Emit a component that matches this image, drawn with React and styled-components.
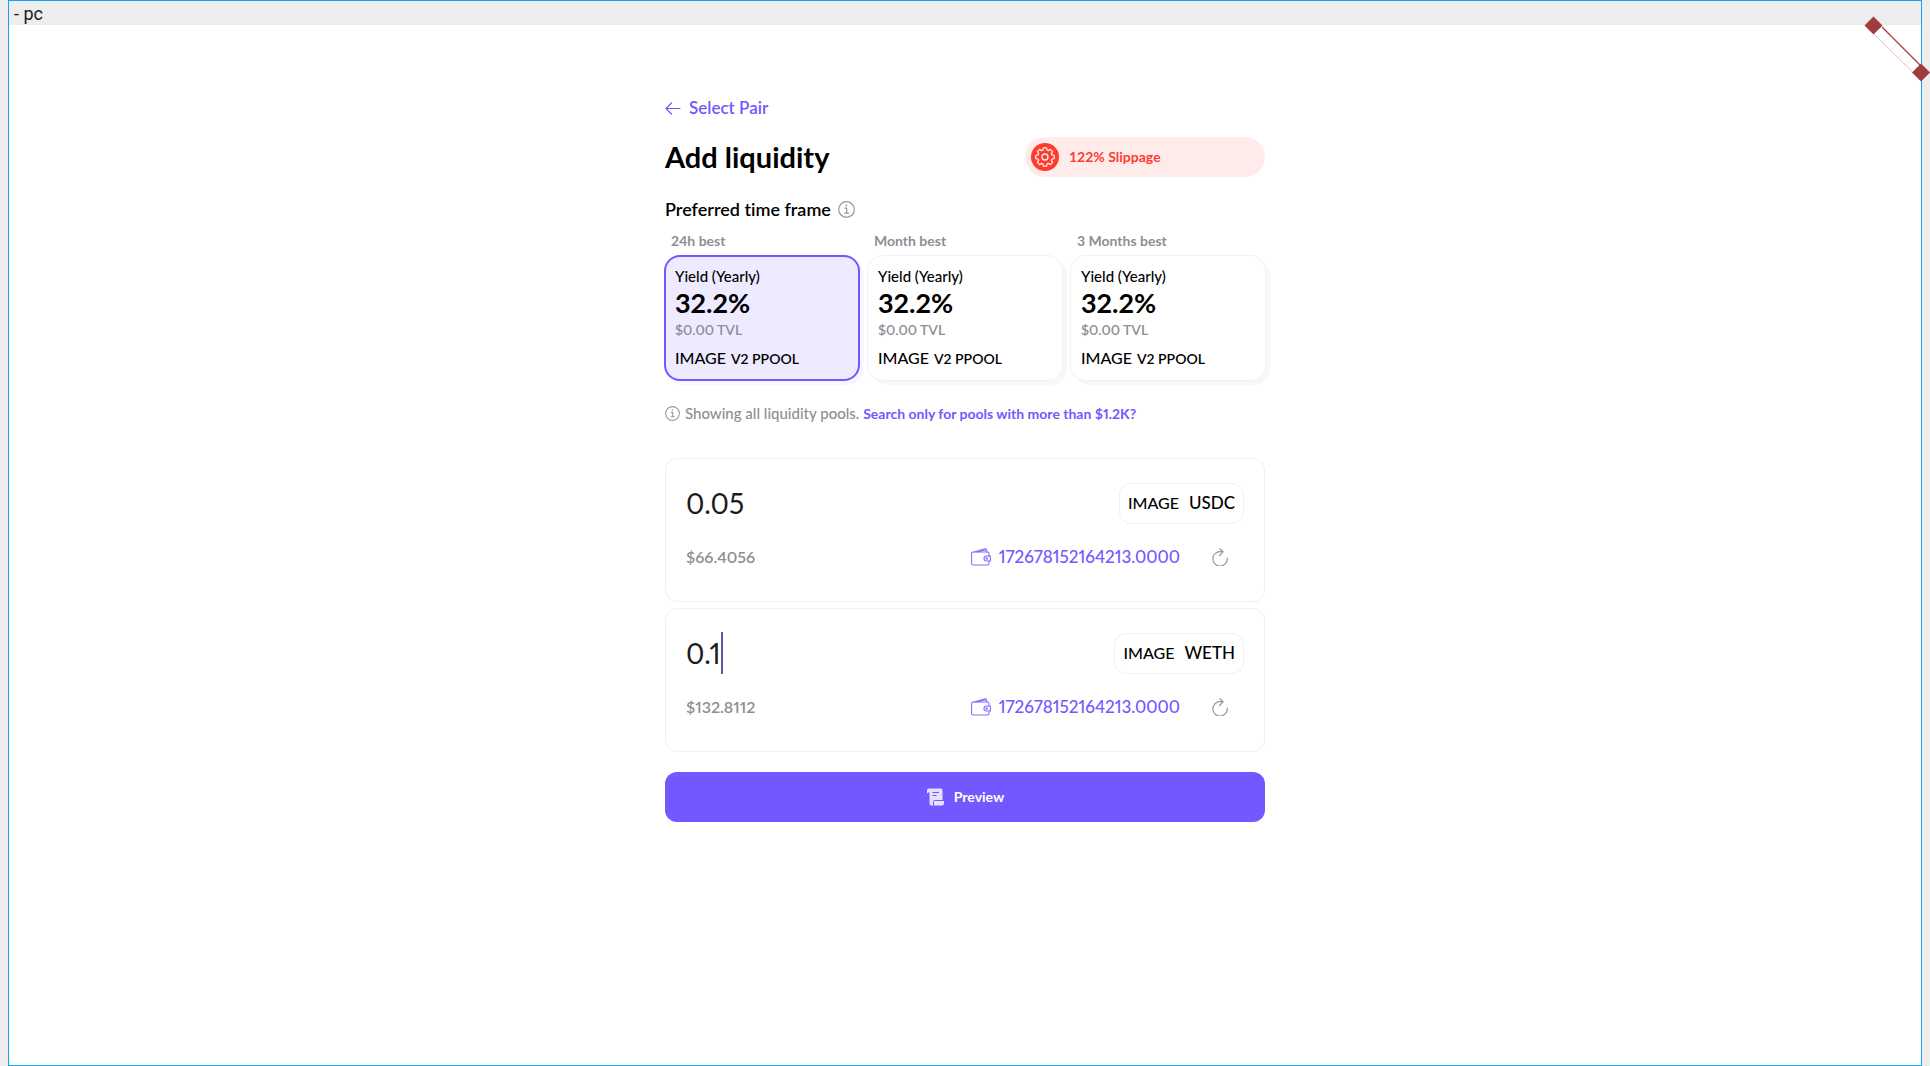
import React, { useState } from "react";
import styled, { createGlobalStyle } from "styled-components";

const GlobalStyle = createGlobalStyle`
  * { box-sizing: border-box; }
  body {
    margin: 0;
    background: #ededed;
    color: #000;
    font-family: Lato, "Open Sans", sans-serif;
    font-size: 16px;
    line-height: 20px;
    font-variant-numeric: proportional-nums;
    font-variant-ligatures: none;
  }
  button, input { font: inherit; color: inherit; font-variant-numeric: inherit; }
  svg { display: block; flex: none; }
`;

const Stage = styled.div`
  position: relative;
  min-height: 100vh;
  padding: 0 8px;
  display: flex;
`;

const Frame = styled.div`
  flex: 1;
  border: 1px solid #0ea5ef;
  background: #fff;
  display: flex;
  flex-direction: column;
`;

const FrameTitle = styled.header`
  height: 24px;
  padding: 3px 5px 1px;
  background: #ededed;
  color: #1d1b20;
  font-family: Roboto, sans-serif;
  font-size: 18px;
  line-height: 20px;
`;

const Banner = styled.svg`
  position: absolute;
  top: 16px;
  right: 0;
`;

const Main = styled.main`
  width: 100%;
  max-width: 600px;
  margin: 0 auto;
  padding: 73px 0 40px;
`;

const BackLink = styled.a`
  display: inline-flex;
  align-items: center;
  gap: 8px;
  color: #7357ff;
  font-weight: 600;
  font-size: 17px;
  text-decoration: none;
`;

const TitleRow = styled.div`
  display: flex;
  align-items: center;
  justify-content: space-between;
  margin-top: 18px;
`;

const Title = styled.h1`
  margin: 0;
  font-size: 29px;
  line-height: 40px;
  font-weight: 700;
`;

const Slippage = styled.button`
  display: flex;
  align-items: center;
  gap: 10px;
  width: 240px;
  height: 40px;
  padding: 0 6px;
  border: 0;
  border-radius: 20px;
  background: #ffecea;
  color: #ff3b30;
  font-size: 14px;
  font-weight: 700;
  font-variant-numeric: tabular-nums;
`;

const Section = styled.h2`
  display: flex;
  align-items: center;
  gap: 7px;
  margin: 22px 0 0;
  font-size: 18px;
  line-height: 20px;
  font-weight: 600;
`;

const Frames = styled.div`
  display: grid;
  grid-template-columns: repeat(3, 1fr);
  gap: 7px;
  margin: 12px -1px 0;
`;

const FrameOption = styled.div`
  display: flex;
  flex-direction: column;
  gap: 4px;
`;

const OptionLabel = styled.span`
  padding-left: 7px;
  color: #8e8e93;
  font-size: 14px;
  font-weight: 700;
`;

const Card = styled.button`
  display: flex;
  flex-direction: column;
  align-items: flex-start;
  height: 126px;
  padding: 11px;
  border: 0;
  border-radius: 16px;
  background: ${(p) => (p.$active ? "#eeeaff" : "#fff")};
  box-shadow: inset 0 0 0 ${(p) => (p.$active ? "2px #7357ff" : "1px #f2f2f4")}, 4px 4px 0 #f8f7fd;
  text-align: left;
`;

const CardLabel = styled.span`
  font-size: 15px;
  font-weight: 500;
`;

const Small = styled.span`
  font-size: 14px;
  font-weight: 600;
  color: ${(p) => (p.$muted ? "#8e8e93" : "inherit")};
`;

const Yield = styled.strong`
  font-size: 27px;
  line-height: 34px;
  font-weight: 700;
`;

const Pool = styled.span`
  display: flex;
  align-items: baseline;
  gap: 5px;
  margin-top: 8px;
  font-size: 16px;
  font-weight: 500;
`;

const Note = styled.p`
  display: flex;
  align-items: center;
  gap: 5px;
  margin: 22px 0 34px;
  color: #8e8e93;
  font-size: 15px;
  font-weight: 500;
`;

const NoteLink = styled.a`
  color: #7357ff;
  font-size: 14px;
  font-weight: 700;
  text-decoration: none;
`;

const Amounts = styled.div`
  display: flex;
  flex-direction: column;
  gap: 6px;
`;

const AmountBox = styled.section`
  height: 144px;
  padding: 23px 20px 0;
  border: 1px solid #f0f0f2;
  border-radius: 12px;
`;

const Row = styled.div`
  display: flex;
  align-items: center;
  justify-content: space-between;
`;

const Entry = styled.label`
  display: flex;
  align-items: center;
  height: 42px;
`;

const AmountInput = styled.input`
  field-sizing: content;
  padding: 0;
  border: 0;
  outline: 0;
  background: none;
  color: #1d1b20;
  font-size: 28px;
  line-height: 42px;
`;

const Caret = styled.span`
  width: 2px;
  height: 42px;
  background: #6750a4;
`;

const Token = styled.button`
  display: flex;
  align-items: center;
  gap: 10px;
  height: 41px;
  padding: 0 8px;
  border: 1px solid #f0f0f2;
  border-radius: 12px;
  background: #fff;
  font-size: 16px;
  font-weight: 500;
`;

const TokenName = styled.span`
  font-size: 17px;
  font-weight: 500;
`;

const Details = styled(Row)`
  margin-top: 23px;
`;

const Fiat = styled.span`
  color: #8e8e93;
  font-weight: 600;
`;

const Wallet = styled.div`
  display: flex;
  align-items: center;
  padding-right: 16px;
`;

const Balance = styled.button`
  display: flex;
  align-items: center;
  gap: 8px;
  padding: 0;
  border: 0;
  background: none;
  color: #7357ff;
  font-size: 17px;
  font-weight: 500;
`;

const Refresh = styled.button`
  margin-left: 32px;
  padding: 0;
  border: 0;
  background: none;
  color: #98989c;
`;

const Preview = styled.button`
  display: flex;
  align-items: center;
  justify-content: center;
  gap: 9px;
  width: 100%;
  height: 50px;
  margin-top: 20px;
  border: 0;
  border-radius: 12px;
  background: #7357ff;
  color: #fff;
  font-size: 14px;
  font-weight: 700;
`;

const line = { fill: "none", stroke: "currentColor", strokeLinecap: "round", strokeLinejoin: "round" };

const ArrowIcon = () => (
  <svg width="16" height="14" viewBox="0 0 16 14" {...line} strokeWidth="1.2">
    <path d="M15 7.5H1M6.5 2L1 7.5L6.5 13" />
  </svg>
);

const InfoIcon = ({ size }) => (
  <svg width={size} height={size} viewBox="0 0 17 17" {...line} stroke="#98989c" strokeWidth="1.2">
    <circle cx="8.5" cy="8.5" r="7.8" />
    <path d="M7 7.2h1.7v5M6.8 12.2h3.8" />
    <circle cx="8.4" cy="4.5" r=".9" fill="#98989c" stroke="none" />
  </svg>
);

const teeth = (() => {
  const pts = [];
  for (let i = 0; i < 8; i += 1) {
    [[-0.29, 7.2], [-0.17, 9.3], [0.17, 9.3], [0.29, 7.2]].forEach(([d, r]) => {
      const a = (i * Math.PI) / 4 + d;
      pts.push(`${(14 + r * Math.sin(a)).toFixed(2)} ${(14 - r * Math.cos(a)).toFixed(2)}`);
    });
  }
  return `M${pts.join("L")}Z`;
})();

const GearIcon = () => (
  <svg width="28" height="28" viewBox="0 0 28 28">
    <circle cx="14" cy="14" r="14" fill="#ff3b30" />
    <g fill="none" stroke="#ffecea" strokeWidth="1.3" strokeLinejoin="round">
      <path d={teeth} />
      <circle cx="14" cy="14" r="3" />
    </g>
  </svg>
);

const WalletIcon = () => (
  <svg width="20" height="18" viewBox="0 0 20 18" {...line} strokeWidth="1.1" opacity=".85">
    <path d="M18 8V5.500Q18 4 16.500 4H2Q.6 4 .6 5.500V15.500Q.6 17 2 17H16.500Q18 17 18 15.500V13" />
    <path d="M3 4L14 .8Q15 .6 15.300 1.500L16 4M6 4L14.500 2" />
    <path d="M19.400 8H15.500Q13 8 13 10.400T15.500 13H19.400Z" />
    <circle cx="15.700" cy="10.500" r=".8" />
  </svg>
);

const RefreshIcon = () => (
  <svg width="16" height="18" viewBox="0 0 16 18" {...line} strokeWidth="1.2">
    <path d="M15.200 10A7.200 7.200 0 1 1 8 3.600H11M7.600 .8L11.200 3.700L7.600 7.500" />
  </svg>
);

const ScrollIcon = () => (
  <svg width="19" height="18" viewBox="0 0 19 18">
    <path d="M1 5.200V2.500Q1 .6 3 .6H14.500Q16.500 .6 16.500 2.600V12H9Q7 12 7 14V17.500H5.500Q3.500 17.500 3.500 15.500V4.500H2V5.200Z" fill="#e6e0ff" />
    <path d="M8 13H18V15.200Q18 17.500 15.700 17.500H8Z" fill="#e6e0ff" />
    <path d="M6.500 4.500h6.500M6.500 7.500h4" stroke="#7357ff" strokeWidth="1.2" />
  </svg>
);

const CornerBanner = () => (
  <Banner width="66" height="67" viewBox="0 0 66 67" aria-hidden="true">
    <path d="M10.500 18.500L18.500 10.500L57 49L49 57Z" fill="#fff" />
    <path d="M19.500 26.500l7-7M27 34l7-7M34.500 41.500l7-7M42 49l7-7" stroke="#f3e8e6" />
    <path d="M10.500 18.500L48 55.500" stroke="#dcc6c6" />
    <path d="M18 11L56 49" stroke="#a04044" strokeWidth="1.200" />
    <path d="M9.500 .5L18.500 9.500L9.500 18.500L.5 9.500Z" fill="#a03c3e" />
    <path d="M57 47.500L66 56.500L57 65.500L48 56.500Z" fill="#a03c3e" />
  </Banner>
);

const options = ["24h best", "Month best", "3 Months best"];

function AmountField({ token, value, fiat, focused }) {
  const [amount, setAmount] = useState(value);
  return (
    <AmountBox>
      <Row>
        <Entry>
          <AmountInput
            aria-label={`${token} amount`}
            value={amount}
            onChange={(e) => setAmount(e.target.value)}
          />
          {focused && <Caret />}
        </Entry>
        <Token type="button">
          <span>IMAGE</span>
          <TokenName>{token}</TokenName>
        </Token>
      </Row>
      <Details>
        <Fiat>{fiat}</Fiat>
        <Wallet>
          <Balance type="button">
            <WalletIcon />
            172678152164213.0000
          </Balance>
          <Refresh type="button" aria-label="Refresh balance">
            <RefreshIcon />
          </Refresh>
        </Wallet>
      </Details>
    </AmountBox>
  );
}

export default function App() {
  const [selected, setSelected] = useState(0);
  return (
    <>
      <GlobalStyle />
      <Stage>
        <Frame>
          <FrameTitle>- pc</FrameTitle>
          <Main>
            <BackLink href="#pairs">
              <ArrowIcon />
              Select Pair
            </BackLink>
            <TitleRow>
              <Title>Add liquidity</Title>
              <Slippage type="button">
                <GearIcon />
                122% Slippage
              </Slippage>
            </TitleRow>
            <Section>
              Preferred time frame
              <InfoIcon size={17} />
            </Section>
            <Frames>
              {options.map((label, i) => (
                <FrameOption key={label}>
                  <OptionLabel>{label}</OptionLabel>
                  <Card type="button" $active={i === selected} onClick={() => setSelected(i)}>
                    <CardLabel>Yield (Yearly)</CardLabel>
                    <Yield>32.2%</Yield>
                    <Small $muted>$0.00 TVL</Small>
                    <Pool>
                      IMAGE
                      <Small>V2 PPOOL</Small>
                    </Pool>
                  </Card>
                </FrameOption>
              ))}
            </Frames>
            <Note>
              <InfoIcon size={15} />
              <span>
                Showing all liquidity pools.{" "}
                <NoteLink href="#filter">Search only for pools with more than $1.2K?</NoteLink>
              </span>
            </Note>
            <Amounts>
              <AmountField token="USDC" value="0.05" fiat="$66.4056" />
              <AmountField token="WETH" value="0.1" fiat="$132.8112" focused />
            </Amounts>
            <Preview type="button">
              <ScrollIcon />
              Preview
            </Preview>
          </Main>
        </Frame>
        <CornerBanner />
      </Stage>
    </>
  );
}
